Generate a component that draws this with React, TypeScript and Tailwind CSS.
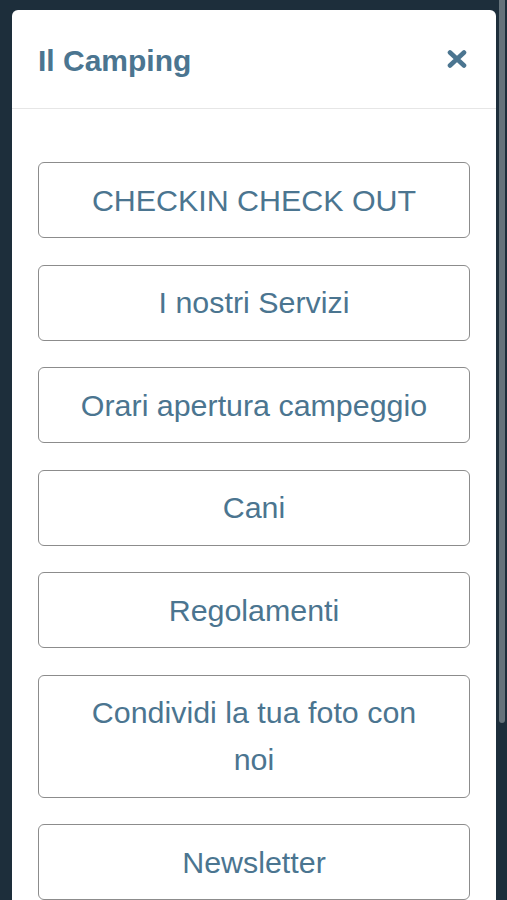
import React from "react";

const items = [
  "CHECKIN CHECK OUT",
  "I nostri Servizi",
  "Orari apertura campeggio",
  "Cani",
  "Regolamenti",
  "Condividi la tua foto con noi",
  "Newsletter",
];

export default function App() {
  return (
    <div
      className="flex h-[900px] w-full overflow-hidden bg-[#1d2e3b]"
      style={{ fontFamily: '"Liberation Sans", Arial, sans-serif' }}
    >
      <div className="flex-1 pl-[12px] pt-[10px]">
        <div className="rounded-t-[6px] bg-white">
          <div className="flex h-[99px] items-center justify-between border-b border-[#e6e6e6] pl-[26px] pr-[29px] pt-[3px]">
            <h1 className="text-[30px] font-bold leading-none text-[#4b7590]">
              Il Camping
            </h1>
            <svg width="20" height="18" viewBox="0 0 20 18" className="-mt-[3px] text-[#4b7590]">
              <path
                d="M3 2.5 L17 15.5 M17 2.5 L3 15.5"
                stroke="currentColor"
                strokeWidth="4.6"
                strokeLinecap="round"
              />
            </svg>
          </div>
          <div className="flex flex-col gap-[26.5px] px-[26px] pt-[53px] pb-[40px]">
            {items.map((t) => (
              <button
                key={t}
                className="rounded-[6px] border border-[#8c8c8c] bg-white px-[40px] py-[13.5px] text-center text-[30.4px] leading-[47px] text-[#4b7590]"
              >
                {t}
              </button>
            ))}
          </div>
        </div>
      </div>
      <div className="flex w-[11px] flex-col pl-[3px] pr-[2px]">
        <div className="h-[723px] w-full rounded-b-[3px] bg-[#66737b]" />
      </div>
    </div>
  );
}
